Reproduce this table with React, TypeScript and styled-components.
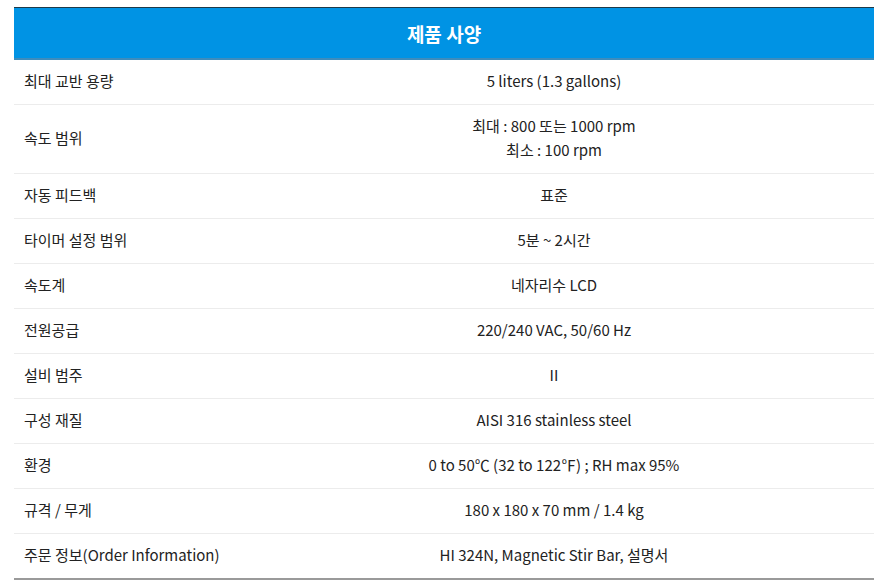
import styled, { createGlobalStyle } from "styled-components";

type Spec = {
  label: string;
  value: string[]; // 줄 단위 값
};

const specs: Spec[] = [
  { label: "최대 교반 용량", value: ["5 liters (1.3 gallons)"] },
  { label: "속도 범위", value: ["최대 : 800 또는 1000 rpm", "최소 : 100 rpm"] },
  { label: "자동 피드백", value: ["표준"] },
  { label: "타이머 설정 범위", value: ["5분 ~ 2시간"] },
  { label: "속도계", value: ["네자리수 LCD"] },
  { label: "전원공급", value: ["220/240 VAC, 50/60 Hz"] },
  { label: "설비 범주", value: ["II"] },
  { label: "구성 재질", value: ["AISI 316 stainless steel"] },
  { label: "환경", value: ["0 to 50℃ (32 to 122℉) ; RH max 95%"] },
  { label: "규격 / 무게", value: ["180 x 180 x 70 mm / 1.4 kg"] },
  { label: "주문 정보(Order Information)", value: ["HI 324N, Magnetic Stir Bar, 설명서"] },
];

const GlobalStyle = createGlobalStyle`
  body {
    margin: 0;
    background: #fff;
    font-family: "Noto Sans CJK KR", "Noto Sans", sans-serif;
  }
`;

const Page = styled.div`
  padding: 7px 11px 0 14px;
`;

const Table = styled.table`
  width: 860px;
  border-collapse: collapse;
  table-layout: fixed;
  border-top: 1px solid #1d3a4a;
  border-bottom: 2px solid #9a9a9a;
`;

const Col = styled.col<{ $w?: number }>`
  width: ${({ $w }) => ($w ? `${$w}px` : "auto")};
`;

const HeadCell = styled.th`
  height: 50px;
  padding: 0;
  background: #0093e4;
  border-bottom: 2px solid #3d8cbc;
  color: #fff;
  font-size: 19px;
  font-weight: 700;
  text-align: center;
`;

const Row = styled.tr`
  & + & td {
    border-top: 1px solid #ececec;
  }
`;

const Label = styled.td`
  padding: 9px 10px 11px;
  font-size: 15px;
  line-height: 24px;
  color: #222;
  text-align: left;
`;

const Value = styled.td`
  padding: 9px 10px 11px;
  font-size: 15px;
  line-height: 24px;
  color: #222;
  text-align: center;
`;

export default function App() {
  return (
    <Page>
      <GlobalStyle />
      <Table>
        <colgroup>
          <Col $w={220} />
          <Col />
        </colgroup>
        <thead>
          <tr>
            <HeadCell colSpan={2}>제품 사양</HeadCell>
          </tr>
        </thead>
        <tbody>
          {specs.map((s) => (
            <Row key={s.label}>
              <Label>{s.label}</Label>
              <Value>
                {s.value.map((line) => (
                  <div key={line}>{line}</div>
                ))}
              </Value>
            </Row>
          ))}
        </tbody>
      </Table>
    </Page>
  );
}
